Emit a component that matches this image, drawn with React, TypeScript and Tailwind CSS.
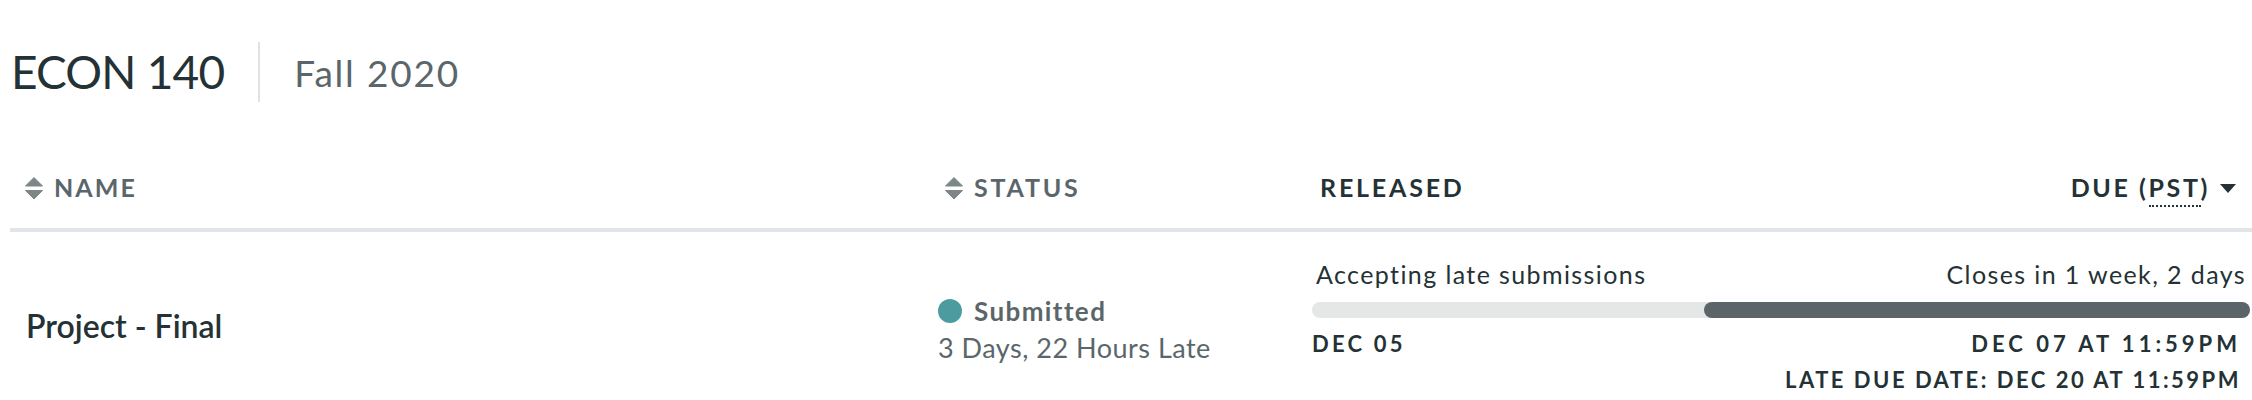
import React from "react";

const font = { fontFamily: "Lato, 'Noto Sans', sans-serif" };

function SortIcon() {
  return (
    <svg width="18" height="23" viewBox="0 0 18 23" className="shrink-0">
      <path d="M9 0.5 L17.5 9 L0.5 9 Z" fill="#7d8787" strokeLinejoin="round" stroke="#7d8787" strokeWidth="1" />
      <path d="M0.5 13.5 L17.5 13.5 L9 22 Z" fill="#7d8787" strokeLinejoin="round" stroke="#7d8787" strokeWidth="1" />
    </svg>
  );
}

function CaretDown() {
  return (
    <svg width="16" height="9" viewBox="0 0 16 9" className="shrink-0">
      <path d="M0 0 L16 0 L8 9 Z" fill="#243235" />
    </svg>
  );
}

export default function App() {
  const lateStart = 41.8;

  return (
    <div className="w-[2252px] h-[400px] overflow-hidden bg-white pl-[10px]" style={font}>
      {/* course title */}
      <div className="flex items-center h-[60px] mt-[42px] pl-[1px]">
        <h1 className="text-[46px] leading-none text-[#243235] font-normal tracking-[-0.8px]">ECON 140</h1>
        <div className="w-[2px] h-[60px] bg-[#dde2e6] mx-[34px]" />
        <span className="text-[37px] leading-none text-[#5b666a] tracking-[1.8px]">Fall 2020</span>
      </div>

      {/* table header */}
      <div className="grid grid-cols-[913px_374px_1fr] h-[84px] mt-[46px] border-b-[4px] border-[#e1e5e9]">
        <div className="flex items-center gap-[11px] pl-[15px]">
          <SortIcon />
          <span className="text-[25px] font-bold text-[#5b666a] tracking-[2.1px]">NAME</span>
        </div>
        <div className="flex items-center gap-[11px] pl-[22px]">
          <SortIcon />
          <span className="text-[25px] font-bold text-[#5b666a] tracking-[2.8px]">STATUS</span>
        </div>
        <div className="flex items-center justify-between pl-[23px] pr-[16px]">
          <span className="text-[25px] font-bold text-[#243235] tracking-[2.8px]">RELEASED</span>
          <div className="flex items-center gap-[10px]">
            <span className="text-[25px] font-bold text-[#243235] tracking-[2.6px]">
              DUE (<span className="border-b-2 border-dotted border-[#243235] pb-[3px]">PST</span>)
            </span>
            <CaretDown />
          </div>
        </div>
      </div>

      {/* assignment row */}
      <div className="grid grid-cols-[913px_374px_1fr] items-center pt-[26px] pb-[26px]">
        <div className="pl-[16px]">
          <span className="text-[32px] leading-[40px] font-semibold text-[#243235]">Project - Final</span>
        </div>
        <div className="pl-[15px] mt-[7px]">
          <div className="flex items-center gap-[12px] h-[32px]">
            <span className="w-[24px] h-[24px] rounded-full bg-[#4c9c9f] shrink-0" />
            <span className="text-[26px] leading-[32px] font-bold text-[#5b666a] tracking-[1.4px]">Submitted</span>
          </div>
          <div className="mt-[5px] text-[27px] leading-[32px] text-[#5b666a] tracking-[0.5px]">3 Days, 22 Hours Late</div>
        </div>
        <div className="pl-[15px] pr-[2px]">
          <div className="flex justify-between pl-[4px] pr-[4px] text-[25px] leading-[32px] text-[#243235] tracking-[1.4px]">
            <span>Accepting late submissions</span>
            <span>Closes in 1 week, 2 days</span>
          </div>
          <div className="relative mt-[12px] h-[16px] rounded-full bg-[#e5e7e6]">
            <div
              className="absolute top-0 right-0 h-full rounded-full bg-[#5b6569]"
              style={{ left: `${lateStart}%` }}
            />
          </div>
          <div className="flex justify-between mt-[12px] pr-[9px] text-[22px] leading-[28px] font-bold text-[#243235] tracking-[3.2px]">
            <span>DEC 05</span>
            <span className="tracking-[4px]">DEC 07 AT 11:59PM</span>
          </div>
          <div className="mt-[8px] pr-[9px] text-right text-[22px] leading-[28px] font-bold text-[#243235] tracking-[2.5px]">
            LATE DUE DATE: DEC 20 AT 11:59PM
          </div>
        </div>
      </div>
    </div>
  );
}
